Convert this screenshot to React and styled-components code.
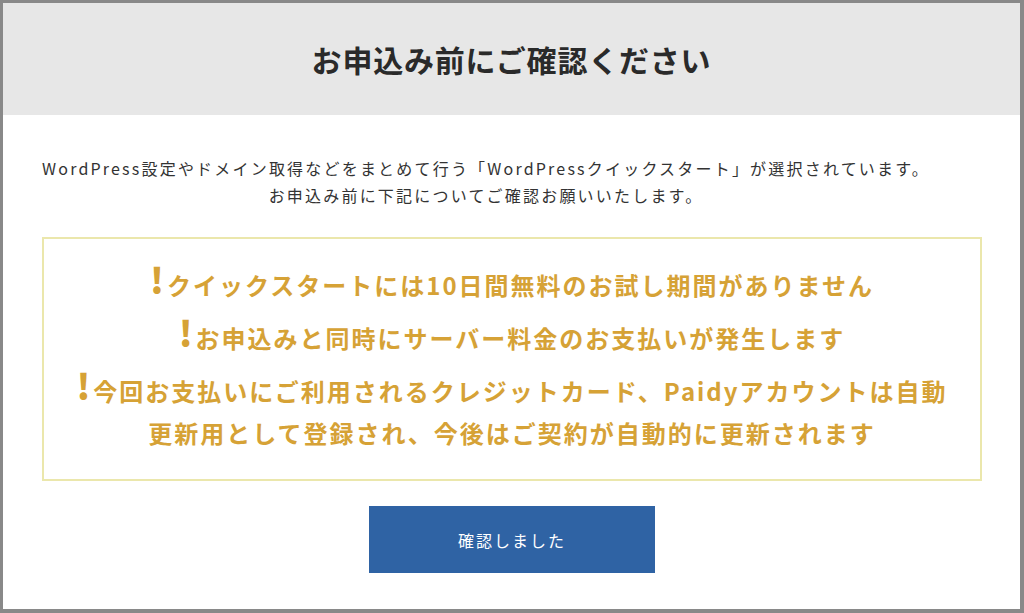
import React from "react";
import styled, { createGlobalStyle } from "styled-components";

const GlobalStyle = createGlobalStyle`
  html, body {
    margin: 0;
    padding: 0;
    background: #898989;
  }
  body {
    font-family: "Noto Sans CJK JP", "Noto Sans", sans-serif;
  }
`;

const Backdrop = styled.div`
  width: 1024px;
  height: 613px;
  box-sizing: border-box;
  padding: 3px 4px 4px 3px;
  background: #898989;
`;

const Modal = styled.div`
  background: #fff;
  height: 100%;
  display: flex;
  flex-direction: column;
`;

const Header = styled.div`
  height: 112px;
  flex-shrink: 0;
  background: #e7e7e7;
  display: flex;
  align-items: center;
  justify-content: center;
`;

const Title = styled.h2`
  margin: 0;
  font-size: 30px;
  font-weight: 700;
  letter-spacing: 0.8px;
  color: #2a2a2a;
`;

const Body = styled.div`
  padding: 40px 38px 0 39px;
  display: flex;
  flex-direction: column;
`;

const Intro = styled.p`
  margin: 0 0 28px;
  width: fit-content;
  font-size: 16px;
  line-height: 27px;
  letter-spacing: 2.2px;
  color: #333;
  text-align: center;
`;

const NoticeBox = styled.div`
  border: 2px solid #ebe7ac;
  padding: 25px 10px;
  display: flex;
  flex-direction: column;
  gap: 11px;
`;

const Notice = styled.p`
  margin: 0;
  text-align: center;
  font-size: 24px;
  line-height: 42px;
  font-weight: 700;
  letter-spacing: 2px;
  color: #d6a236;
`;

const Bang = styled.span`
  display: inline-block;
  font-size: 35px;
  line-height: 0;
  font-weight: 900;
  margin-right: 3px;
  letter-spacing: 0;
  position: relative;
  top: -1px;
`;

const Button = styled.button`
  align-self: center;
  margin-top: 25px;
  width: 286px;
  height: 67px;
  border: none;
  background: #2f63a4;
  color: #fff;
  font-family: "Noto Sans CJK JP", "Noto Sans", sans-serif;
  font-size: 16px;
  letter-spacing: 2px;
  cursor: pointer;
`;

const notices = [
  ["クイックスタートには10日間無料のお試し期間がありません"],
  ["お申込みと同時にサーバー料金のお支払いが発生します"],
  [
    "今回お支払いにご利用されるクレジットカード、Paidyアカウントは自動",
    "更新用として登録され、今後はご契約が自動的に更新されます",
  ],
];

export default function App() {
  return (
    <>
      <GlobalStyle />
      <Backdrop>
        <Modal>
          <Header>
            <Title>お申込み前にご確認ください</Title>
          </Header>
          <Body>
            <Intro>
              WordPress設定やドメイン取得などをまとめて行う「WordPressクイックスタート」が選択されています。
              <br />
              お申込み前に下記についてご確認お願いいたします。
            </Intro>
            <NoticeBox>
              {notices.map((lines, i) => (
                <Notice key={i}>
                  <Bang>!</Bang>
                  {lines.map((l, j) => (
                    <React.Fragment key={j}>
                      {j > 0 && <br />}
                      {l}
                    </React.Fragment>
                  ))}
                </Notice>
              ))}
            </NoticeBox>
            <Button>確認しました</Button>
          </Body>
        </Modal>
      </Backdrop>
    </>
  );
}
